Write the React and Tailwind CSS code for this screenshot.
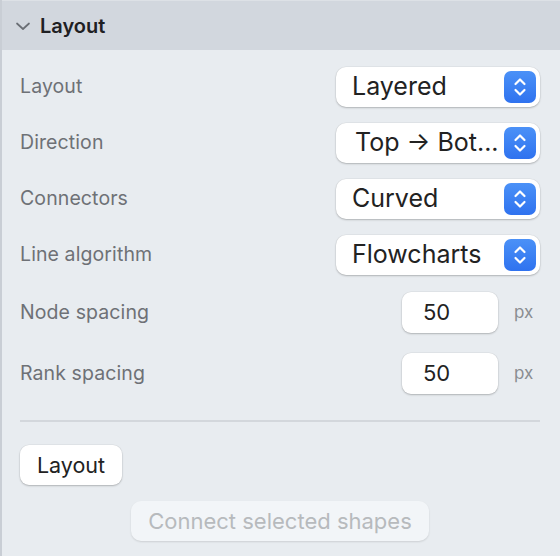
import React from 'react';

const Stepper = () => (
  <div className="w-[32px] h-[32px] rounded-[7px] bg-gradient-to-b from-[#4b91f7] to-[#2f72ef] flex items-center justify-center">
    <svg width="14" height="22" viewBox="0 0 14 22" fill="none" stroke="white" strokeWidth="2.2" strokeLinecap="round" strokeLinejoin="round">
      <path d="M2.5 8 L7 3.5 L11.5 8" />
      <path d="M2.5 14 L7 18.5 L11.5 14" />
    </svg>
  </div>
);

const SelectRow = ({ label, value, indent }) => (
  <div className="h-[56px] flex items-center justify-between">
    <span className="text-[19.5px] text-[#6e7176] tracking-[0.1px]">{label}</span>
    <div className="w-[204px] h-[40px] rounded-[10px] bg-white shadow-[0_1px_2px_rgba(0,0,0,0.22),0_0_0_0.5px_rgba(0,0,0,0.06)] flex items-center justify-between pr-[4px]">
      <span className={`text-[25px] text-[#222] whitespace-nowrap ${indent ? 'pl-[19px]' : 'pl-[16px]'}`}>{value}</span>
      <Stepper />
    </div>
  </div>
);

const NumberRow = ({ label, value }) => (
  <div className="h-[41px] flex items-center">
    <span className="text-[19.5px] text-[#6e7176] tracking-[0.1px] flex-1">{label}</span>
    <div className="w-[96px] h-[41px] rounded-[9px] bg-white shadow-[0_1px_2px_rgba(0,0,0,0.22),0_0_0_0.5px_rgba(0,0,0,0.06)] flex items-center pl-[21px]">
      <span className="text-[22px] text-[#222]">{value}</span>
    </div>
    <span className="w-[42px] pl-[16px] text-[17px] text-[#8a8d91]">px</span>
  </div>
);

const App = () => {
  return (
    <div className="w-[560px] h-[556px] bg-[#e8ecf0] border-l-2 border-[#c9ced5] font-['Inter',sans-serif] overflow-hidden">
      {/* Header */}
      <div className="h-[50px] bg-[#d2d7de] border-t border-[#dde1e6] flex items-center pl-[12px]">
        <svg width="18" height="18" viewBox="0 0 18 18" fill="none" stroke="#6a6e74" strokeWidth="1.7" strokeLinecap="round" strokeLinejoin="round">
          <path d="M3 6.5 L9 12 L15 6.5" />
        </svg>
        <span className="ml-[8px] text-[20px] font-semibold text-[#1f2023]">Layout</span>
      </div>

      {/* Body */}
      <div className="pl-[18px] pr-[20px] pt-[9px]">
        <SelectRow label="Layout" value="Layered" />
        <SelectRow label="Direction" value="Top → Bot..." indent />
        <SelectRow label="Connectors" value="Curved" />
        <SelectRow label="Line algorithm" value="Flowcharts" />

        <div className="mt-[9px] flex flex-col gap-[20px]">
          <NumberRow label="Node spacing" value="50" />
          <NumberRow label="Rank spacing" value="50" />
        </div>

        <div className="mt-[26px] border-t-2 border-[#d3d7dc]" />

        <button className="mt-[23px] w-[102px] h-[40px] rounded-[9px] bg-white shadow-[0_1px_2px_rgba(0,0,0,0.22),0_0_0_0.5px_rgba(0,0,0,0.06)] text-[21.5px] text-[#222]">
          Layout
        </button>

        <div className="mt-[16px] flex justify-center">
          <button className="w-[298px] h-[40px] rounded-[10px] bg-[#f2f5f8] shadow-[0_1px_2px_rgba(0,0,0,0.12)] text-[22px] text-[#b7babd] whitespace-nowrap">
            Connect selected shapes
          </button>
        </div>
      </div>
    </div>
  );
};

export default App;
